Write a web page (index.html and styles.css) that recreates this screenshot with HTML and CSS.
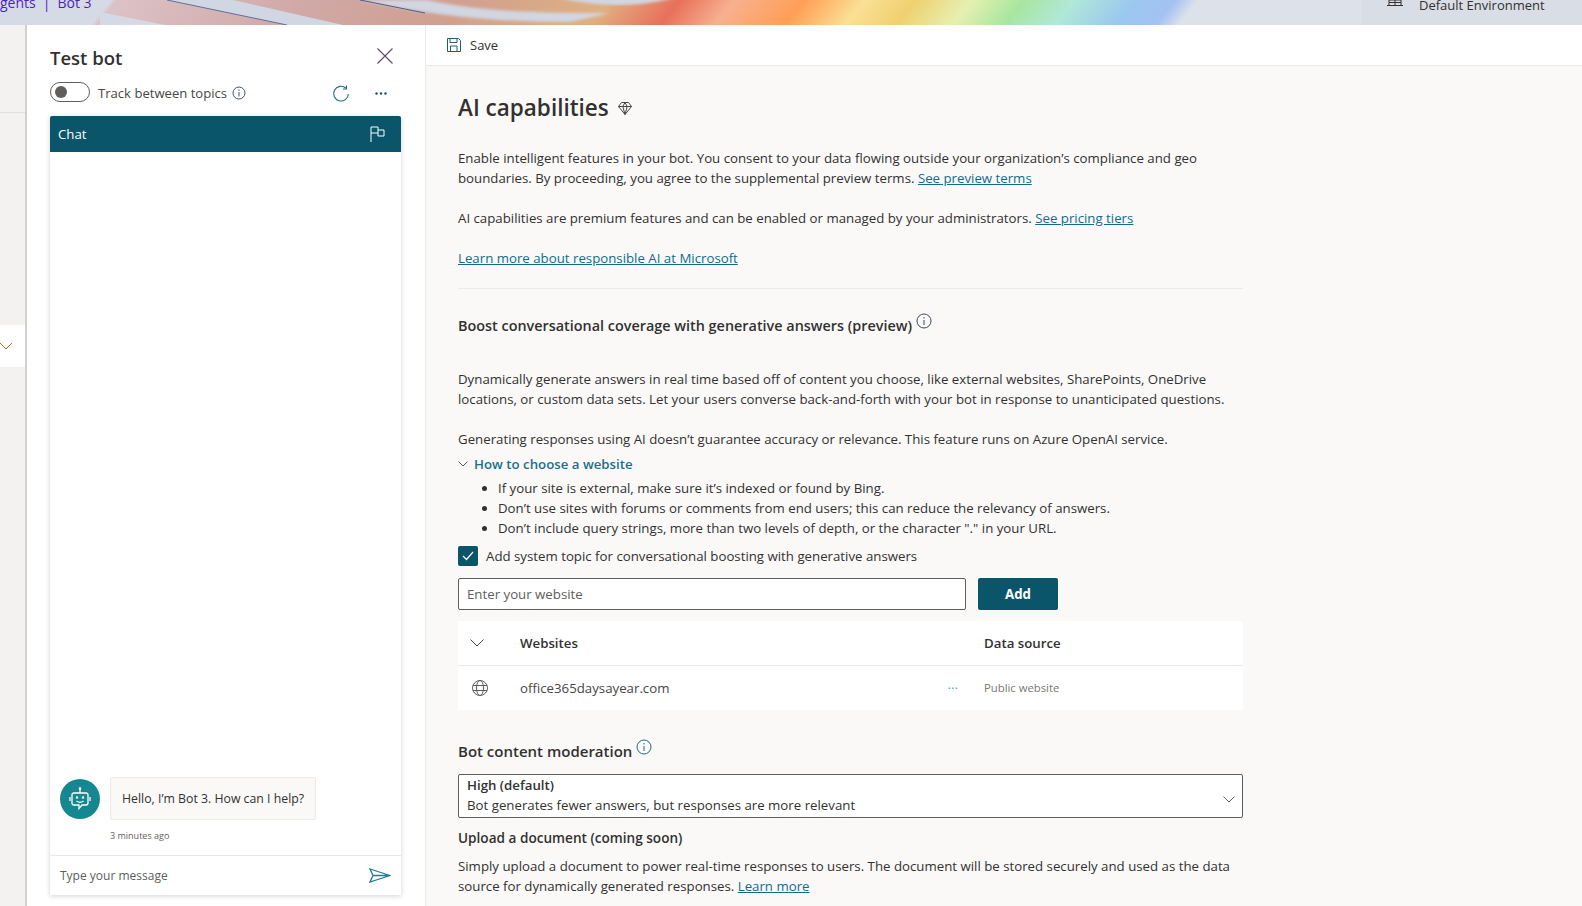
FILE: index.html
```html
<!DOCTYPE html>
<html lang="en">
<head>
  <meta charset="UTF-8">
  <title>AI capabilities</title>
  <link rel="stylesheet" href="styles.css">
</head>
<body>
  <header class="banner">
    <svg class="banner-art" width="1200" height="25" viewBox="0 0 1200 25">
      <defs>
        <linearGradient id="rainbow" gradientUnits="userSpaceOnUse" x1="0" y1="0" x2="1185" y2="948">
          <stop offset="0" stop-color="#d6dae6"/>
          <stop offset="0.057" stop-color="#d6dae6"/>
          <stop offset="0.06" stop-color="#dcc2c6"/>
          <stop offset="0.16" stop-color="#d0a8a6"/>
          <stop offset="0.237" stop-color="#d0a090"/>
          <stop offset="0.314" stop-color="#dfb080"/>
          <stop offset="0.35" stop-color="#e8705a"/>
          <stop offset="0.378" stop-color="#f8b090"/>
          <stop offset="0.414" stop-color="#ff9f55"/>
          <stop offset="0.445" stop-color="#fbe095"/>
          <stop offset="0.471" stop-color="#f0d070"/>
          <stop offset="0.5" stop-color="#e6f0b0"/>
          <stop offset="0.527" stop-color="#a8e6a0"/>
          <stop offset="0.553" stop-color="#b0e8d8"/>
          <stop offset="0.584" stop-color="#9ac8f0"/>
          <stop offset="0.605" stop-color="#a4c2f2"/>
          <stop offset="0.617" stop-color="#dde2ea"/>
        </linearGradient>
        <filter id="soft"><feGaussianBlur stdDeviation="1.5"/></filter>
      </defs>
      <rect width="1200" height="25" fill="url(#rainbow)"/>
      <path d="M100 12L165 25H100Z" fill="#d5d9e6"/>
      <path d="M167 0H233L343 25H287Z" fill="#d1d6e3"/>
      <path d="M167 0L287 25" stroke="#5f6f98" fill="none"/>
      <path d="M360 0H427C480 12 540 13 610 13L570 22C500 22 440 17 360 0Z" fill="#d1d6e3" filter="url(#soft)"/>
      <path d="M360 0L425 13" stroke="#4a5f90" fill="none"/>
      <path d="M550 -4H680C640 8 600 8 550 -4Z" fill="#d1d6e3" filter="url(#soft)"/>
    </svg>
    <div class="crumbs">gents<span class="crumb-bar">|</span>Bot 3</div>
    <div class="env">
      <svg width="18" height="12" viewBox="0 0 18 12"><path d="M1 9.5h16M3 9.5V4h12v5.5M6 4V0M12 4V0M3 6.5h12M9 0v9.5" fill="none" stroke="#323130"/></svg>
      <span>Default Environment</span>
    </div>
  </header>

  <div class="layout">
    <aside class="rail">
      <div class="rail-top"></div>
      <div class="rail-item">
        <svg width="14" height="8" viewBox="0 0 14 8"><path d="M1 1l6 6 6-6" fill="none" stroke="#a4702f"/></svg>
      </div>
    </aside>

    <section class="test-panel">
      <div class="panel-title">
        <h2>Test bot</h2>
        <svg width="18" height="18" viewBox="0 0 18 18"><path d="M1.5 1.5l15 15M16.5 1.5l-15 15" stroke="#5b4a68" stroke-width="1.1"/></svg>
      </div>
      <div class="panel-tools">
        <span class="toggle"><i></i></span>
        <span class="toggle-label">Track between topics</span>
        <svg class="info" width="14" height="14" viewBox="0 0 14 14"><circle cx="7" cy="7" r="6" fill="none" stroke="#44546a"/><path d="M7 6v4.5M7 3.5v1.4" stroke="#44546a"/></svg>
        <svg class="refresh" width="18" height="18" viewBox="0 0 18 18"><path d="M13.8 3A7.4 7.4 0 1 0 16.4 9" fill="none" stroke="#1b6a80" stroke-width="1.1"/><path d="M14.5 .5V4H11" fill="none" stroke="#1b6a80" stroke-width="1.1"/></svg>
        <svg class="dots" width="12" height="3" viewBox="0 0 12 3"><circle cx="1.5" cy="1.5" r="1.2" fill="#174f66"/><circle cx="6" cy="1.5" r="1.2" fill="#174f66"/><circle cx="10.5" cy="1.5" r="1.2" fill="#174f66"/></svg>
      </div>
      <div class="chat">
        <div class="chat-head">
          <span>Chat</span>
          <svg width="15" height="16" viewBox="0 0 15 16"><path d="M1 16V1h7v3h6v6H8V7H1M8 4v3" fill="none" stroke="#fff"/></svg>
        </div>
        <div class="chat-body">
          <div class="message">
            <div class="avatar">
              <svg width="24" height="26" viewBox="0 0 24 26"><path d="M6 7h12a2 2 0 0 1 2 2v8a2 2 0 0 1-2 2h-4l-3 3.5V19H6a2 2 0 0 1-2-2V9a2 2 0 0 1 2-2zM12 7V3M2 11v4M22 11v4M8.5 15c2 1.5 5 1.5 7 0" fill="none" stroke="#fff" stroke-width="1.3"/><circle cx="12" cy="2.5" r="1.3" fill="#fff"/><circle cx="9" cy="11.5" r="1.2" fill="#fff"/><circle cx="15" cy="11.5" r="1.2" fill="#fff"/></svg>
            </div>
            <div class="bubble">Hello, I’m Bot 3. How can I help?</div>
          </div>
          <div class="stamp">3 minutes ago</div>
        </div>
        <div class="chat-input">
          <span>Type your message</span>
          <svg width="22" height="15" viewBox="0 0 22 15"><path d="M1 1l20 6.5L1 14l3-6.5zM4 7.5h17" fill="none" stroke="#1a7f93" stroke-width="1.3"/></svg>
        </div>
      </div>
    </section>

    <main class="main">
      <div class="toolbar">
        <svg width="14" height="14" viewBox="0 0 14 14"><path d="M.5.5h11l2 2v11H.5zM3 .5v4h7v-4M3.5 13.5V8h6.5v5.5" fill="none" stroke="#1b5e78"/></svg>
        <span>Save</span>
      </div>
      <div class="content">
        <div class="page-title">
          <h1>AI capabilities</h1>
          <svg width="14" height="13" viewBox="0 0 14 13"><path d="M3.5.5h7l3 4L7 12.5.5 4.5zM.5 4.5h13M4.8 4.5L7 12.5l2.2-8M4.8 4.5L7 .5l2.2 4" fill="none" stroke="#484644"/></svg>
        </div>
        <p class="copy first">Enable intelligent features in your bot. You consent to your data flowing outside your organization’s compliance and geo<br>boundaries. By proceeding, you agree to the supplemental preview terms. <a href="#">See preview terms</a></p>
        <p class="copy">AI capabilities are premium features and can be enabled or managed by your administrators. <a href="#">See pricing tiers</a></p>
        <p class="copy"><a href="#">Learn more about responsible AI at Microsoft</a></p>
        <hr class="rule">
        <h3 class="boost">Boost conversational coverage with generative answers (preview)
          <svg class="info-lg" width="16" height="16" viewBox="0 0 16 16"><circle cx="8" cy="8" r="7" fill="none" stroke="#3b4a5a"/><path d="M8 7v5M8 4v1.5" stroke="#3b4a5a"/></svg>
        </h3>
        <p class="copy gen">Dynamically generate answers in real time based off of content you choose, like external websites, SharePoints, OneDrive<br>locations, or custom data sets. Let your users converse back-and-forth with your bot in response to unanticipated questions.</p>
        <p class="copy">Generating responses using AI doesn’t guarantee accuracy or relevance. This feature runs on Azure OpenAI service.</p>
        <div class="how">
          <svg width="10" height="6" viewBox="0 0 10 6"><path d="M.5.5L5 5 9.5.5" fill="none" stroke="#4a5a66"/></svg>
          <span>How to choose a website</span>
        </div>
        <ul class="tips">
          <li>If your site is external, make sure it’s indexed or found by Bing.</li>
          <li>Don’t use sites with forums or comments from end users; this can reduce the relevancy of answers.</li>
          <li>Don’t include query strings, more than two levels of depth, or the character "." in your URL.</li>
        </ul>
        <div class="check-row">
          <span class="check"><svg width="12" height="10" viewBox="0 0 12 10"><path d="M1 5l3.5 3.5L11 1" fill="none" stroke="#fff" stroke-width="1.2"/></svg></span>
          <span>Add system topic for conversational boosting with generative answers</span>
        </div>
        <div class="site-form">
          <div class="site-input">Enter your website</div>
          <div class="site-add">Add</div>
        </div>
        <div class="sites">
          <div class="sites-row head">
            <span class="col-icon"><svg width="14" height="8" viewBox="0 0 14 8"><path d="M.5.5L7 7 13.5.5" fill="none" stroke="#484644"/></svg></span>
            <span class="col-name">Websites</span>
            <span class="col-src">Data source</span>
          </div>
          <div class="sites-row">
            <span class="col-icon"><svg width="16" height="16" viewBox="0 0 16 16"><g fill="none" stroke="#605e5c"><circle cx="8" cy="8" r="7.5"/><ellipse cx="8" cy="8" rx="3.5" ry="7.5"/><path d="M1 5.5h14M1 10.5h14"/></g></svg></span>
            <span class="col-name site-name">office365daysayear.com<em>···</em></span>
            <span class="col-src public">Public website</span>
          </div>
        </div>
        <h3 class="moderation">Bot content moderation
          <svg class="info-lg" width="16" height="16" viewBox="0 0 16 16"><circle cx="8" cy="8" r="7" fill="none" stroke="#1b6a80"/><path d="M8 7v5M8 4v1.5" stroke="#1b6a80"/></svg>
        </h3>
        <div class="select">
          <div class="select-text">
            <div class="select-value">High (default)</div>
            <div>Bot generates fewer answers, but responses are more relevant</div>
          </div>
          <svg width="12" height="7" viewBox="0 0 12 7"><path d="M.5.5L6 6 11.5.5" fill="none" stroke="#605e5c"/></svg>
        </div>
        <h4 class="upload">Upload a document (coming soon)</h4>
        <p class="copy upload-copy">Simply upload a document to power real-time responses to users. The document will be stored securely and used as the data<br>source for dynamically generated responses. <a href="#">Learn more</a></p>
      </div>
    </main>
  </div>
</body>
</html>
```

FILE: styles.css
```css
html, body {
  margin: 0;
  padding: 0;
  height: 906px;
  overflow: hidden;
}
body {
  font-family: "Open Sans", "Noto Sans", sans-serif;
  font-size: 13.25px;
  color: #323130;
  background: #fff;
}
h1, h2, h3, h4, p, ul {
  margin: 0;
  padding: 0;
}
a {
  color: #0f6c8c;
}

.banner {
  position: relative;
  height: 25px;
  background: #dde2ea;
  overflow: hidden;
}
.banner-art {
  position: absolute;
  left: 0;
  top: 0;
}
.crumbs {
  position: absolute;
  left: 0;
  top: -7px;
  font-size: 14px;
  line-height: 20px;
  color: #4b1fc4;
  white-space: nowrap;
}
.crumb-bar {
  margin: 0 7px;
}
.env {
  position: absolute;
  right: 0;
  top: 0;
  width: 220px;
  height: 25px;
  padding-left: 24px;
  box-sizing: border-box;
  background: #d8dde6;
  display: flex;
  gap: 15px;
}
.env svg {
  margin-top: -4px;
}
.env span {
  margin-top: -5px;
  font-size: 13px;
  line-height: 20px;
}

.layout {
  display: flex;
  height: 881px;
}
.rail {
  width: 25px;
  flex: none;
  background: #f3f2f1;
  border-right: 2px solid #d2d0ce;
}
.rail-top {
  height: 87px;
  border-bottom: 1px solid #e1dfdd;
}
.rail-item {
  margin-top: 212px;
  height: 42px;
  background: #fff;
  display: flex;
  align-items: center;
}
.rail-item svg {
  margin-left: -1px;
}

.test-panel {
  width: 399px;
  flex: none;
  box-sizing: border-box;
  background: #fff;
  border-right: 1px solid #edebe9;
  padding: 0 24px 11px 23px;
  display: flex;
  flex-direction: column;
}
.panel-title {
  height: 57px;
  box-sizing: border-box;
  padding: 8px 7px 0 0;
  display: flex;
  align-items: center;
  justify-content: space-between;
}
.panel-title h2 {
  font-size: 18.5px;
  font-weight: 600;
}
.panel-title svg {
  margin-top: -3px;
}
.panel-tools {
  height: 34px;
  display: flex;
  align-items: flex-start;
}
.toggle {
  width: 34px;
  height: 18px;
  border: 1px solid #605e5c;
  border-radius: 10px;
  display: flex;
  align-items: center;
  padding-left: 4px;
}
.toggle i {
  width: 12px;
  height: 12px;
  border-radius: 50%;
  background: #605e5c;
}
.toggle-label {
  margin: 1px 0 0 8px;
  font-size: 13.1px;
  line-height: 20px;
  color: #484644;
}
.info {
  margin: 4px 0 0 5px;
}
.refresh {
  margin: 3px 0 0 auto;
}
.dots {
  margin: 10px 14px 0 25px;
}

.chat {
  flex: 1;
  display: flex;
  flex-direction: column;
  box-shadow: 0 1px 5px rgba(0, 0, 0, 0.18);
  background: #fff;
}
.chat-head {
  height: 36px;
  flex: none;
  background: #0b556a;
  color: #fff;
  border-radius: 2px 2px 0 0;
  padding: 0 16px 0 8px;
  display: flex;
  align-items: center;
  justify-content: space-between;
}
.chat-body {
  flex: 1;
  display: flex;
  flex-direction: column;
  justify-content: flex-end;
  padding: 0 10px 12px;
}
.message {
  display: flex;
  align-items: center;
  gap: 10px;
}
.avatar {
  width: 40px;
  height: 40px;
  border-radius: 50%;
  background: #148790;
  display: flex;
  align-items: center;
  justify-content: center;
}
.bubble {
  font-size: 12.3px;
  height: 41px;
  line-height: 41px;
  padding: 0 11px;
  background: #faf9f8;
  border: 1px solid #edebe9;
  border-radius: 2px;
}
.stamp {
  font-size: 9px;
  line-height: 14px;
  margin: 9px 0 0 50px;
  color: #605e5c;
}
.chat-input {
  height: 39px;
  flex: none;
  border-top: 1px solid #e9e8e7;
  padding: 0 10px;
  display: flex;
  align-items: center;
  justify-content: space-between;
  font-size: 12px;
  color: #605e5c;
}

.main {
  flex: 1;
  min-width: 0;
  background: #faf9f8;
}
.toolbar {
  height: 40px;
  background: #fff;
  border-bottom: 1px solid #edebe9;
  padding-left: 21px;
  display: flex;
  align-items: center;
  gap: 9px;
  font-size: 13px;
}
.content {
  width: 785px;
  padding-left: 32px;
  line-height: 20px;
}
.page-title {
  margin-top: 24px;
  height: 36px;
  display: flex;
  align-items: center;
  gap: 9px;
}
.page-title h1 {
  font-size: 22.5px;
  font-weight: 600;
}
.copy {
  margin-top: 20px;
}
.copy.first {
  margin-top: 22px;
}
.rule {
  margin: 20px 0 0;
  border: 0;
  border-top: 1px solid #edebe9;
}
.boost {
  margin-top: 24px;
  font-size: 14.4px;
  font-weight: 600;
}
.info-lg {
  vertical-align: 2px;
}
.copy.gen {
  margin-top: 33px;
}
.how {
  margin-top: 5px;
  display: flex;
  align-items: center;
  gap: 6px;
  font-weight: 600;
  color: #17708c;
}
.tips {
  margin: 4px 0 0 40px;
}
.check-row {
  margin-top: 8px;
  height: 20px;
  display: flex;
  align-items: center;
  gap: 8px;
}
.check {
  width: 20px;
  height: 20px;
  border-radius: 2px;
  background: #0b556a;
  display: flex;
  align-items: center;
  justify-content: center;
}
.site-form {
  margin-top: 12px;
  display: flex;
  gap: 12px;
}
.site-input {
  width: 508px;
  height: 32px;
  box-sizing: border-box;
  padding: 0 8px;
  line-height: 30px;
  background: #fff;
  border: 1px solid #605e5c;
  border-radius: 2px;
  color: #605e5c;
}
.site-add {
  width: 80px;
  height: 32px;
  line-height: 32px;
  text-align: center;
  border-radius: 2px;
  background: #0b556a;
  color: #fff;
  font-weight: 700;
}
.sites {
  margin-top: 11px;
  background: #fff;
}
.sites-row {
  height: 44px;
  display: flex;
  align-items: center;
}
.sites-row.head {
  border-bottom: 1px solid #edebe9;
  font-weight: 600;
}
.col-icon {
  width: 62px;
  padding-left: 14px;
  box-sizing: border-box;
  display: flex;
}
.head .col-icon {
  padding-left: 12px;
}
.col-name {
  width: 464px;
}
.site-name {
  display: flex;
  justify-content: space-between;
  padding-right: 26px;
  box-sizing: border-box;
  color: #484644;
}
.site-name em {
  font-style: normal;
  color: #5ba3bd;
}
.public {
  font-size: 11.3px;
  color: #797775;
}
.moderation {
  margin-top: 29px;
  font-size: 15px;
  font-weight: 600;
}
.select {
  margin-top: 13px;
  height: 44px;
  box-sizing: border-box;
  background: #fff;
  border: 1px solid #605e5c;
  border-radius: 2px;
  padding: 0 8px 2px;
  display: flex;
  align-items: center;
  justify-content: space-between;
}
.select svg {
  margin: 8px -1px 0 0;
}
.select-value {
  font-weight: 600;
}
.upload {
  margin-top: 10px;
  font-size: 13.6px;
  font-weight: 600;
}
.copy.upload-copy {
  margin-top: 8px;
}
```
